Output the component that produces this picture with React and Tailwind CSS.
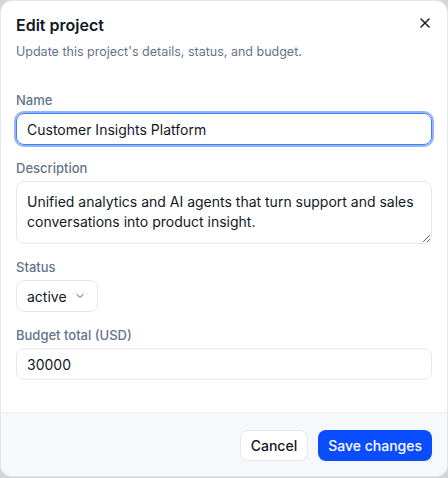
import { useState } from 'react';
import { X, ChevronDown } from 'lucide-react';

export default function App() {
  const [name, setName] = useState('Customer Insights Platform');
  const [desc, setDesc] = useState('Unified analytics and AI agents that turn support and sales conversations into product insight.');
  const [status, setStatus] = useState('active');
  const [budget, setBudget] = useState('30000');

  return (
    <div className="h-[478px] w-[448px] bg-[#d4d6db] font-['Inter',sans-serif]">
      <div className="flex h-[477px] flex-col overflow-hidden rounded-[12px] border border-[#e5e7eb] bg-white">
        <div className="relative px-[15px] pt-[12px]">
          <h2 className="text-[16px] font-semibold leading-[24px] text-[#111827]">Edit project</h2>
          <p className="mt-[6px] text-[12.5px] leading-[18px] text-[#64748b]">Update this project's details, status, and budget.</p>
          <button className="absolute right-[14px] top-[14px] text-[#111827]">
            <X size={16} strokeWidth={2.2} />
          </button>
        </div>

        <div className="flex flex-col gap-[14px] px-[15px] pt-[30px]">
          <label className="flex flex-col gap-[4px]">
            <span className="text-[13px] font-medium leading-[18px] text-[#64748b]">Name</span>
            <input
              value={name}
              onChange={(e) => setName(e.target.value)}
              className="h-[32px] rounded-[8px] border border-[#3b82f6] px-[10px] text-[14px] text-[#111827] outline-none ring-[2px] ring-[#93b4f8]"
            />
          </label>
          <label className="flex flex-col gap-[4px]">
            <span className="text-[13px] font-medium leading-[18px] text-[#64748b]">Description</span>
            <textarea
              value={desc}
              onChange={(e) => setDesc(e.target.value)}
              rows={2}
              className="h-[63px] rounded-[8px] border border-[#e5e7eb] px-[10px] py-[10px] text-[14px] leading-[20px] text-[#111827] outline-none"
            />
          </label>
          <label className="flex flex-col gap-[4px]">
            <span className="text-[13px] font-medium leading-[18px] text-[#64748b]">Status</span>
            <div className="relative w-[82px]">
              <select
                value={status}
                onChange={(e) => setStatus(e.target.value)}
                className="h-[32px] w-full appearance-none rounded-[8px] border border-[#e5e7eb] bg-white pl-[10px] text-[14px] text-[#111827] outline-none"
              >
                <option value="active">active</option>
                <option value="paused">paused</option>
                <option value="archived">archived</option>
              </select>
              <ChevronDown size={12} strokeWidth={1.8} className="pointer-events-none absolute right-[12px] top-[10px] text-[#374151]" />
            </div>
          </label>
          <label className="flex flex-col gap-[4px]">
            <span className="text-[13px] font-medium leading-[18px] text-[#64748b]">Budget total (USD)</span>
            <input
              value={budget}
              onChange={(e) => setBudget(e.target.value)}
              className="h-[32px] rounded-[8px] border border-[#e5e7eb] px-[10px] text-[14px] text-[#111827] outline-none"
            />
          </label>
        </div>

        <div className="mt-auto flex h-[64px] items-center justify-end gap-[10px] border-t border-[#eef0f3] bg-[#f7f8fb] px-[15px] pt-[2px]">
          <button className="h-[31px] rounded-[8px] border border-[#e5e7eb] bg-white px-[10px] text-[14px] font-medium text-[#111827]">Cancel</button>
          <button className="h-[31px] rounded-[8px] bg-[#0a4dff] px-[10px] text-[14px] font-medium text-white">Save changes</button>
        </div>
      </div>
    </div>
  );
}
